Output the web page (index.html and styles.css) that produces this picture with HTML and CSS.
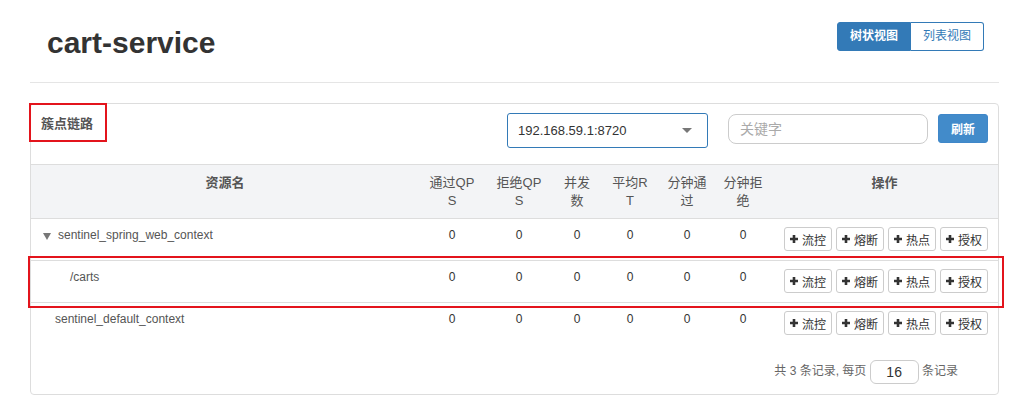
FILE: index.html
```html
<!DOCTYPE html>
<html lang="zh-CN">

<head>
    <meta charset="UTF-8">
    <title>cart-service - 簇点链路</title>
    <link rel="stylesheet" href="styles.css">
</head>

<body>
    <div class="page">
        <div class="page-header">
            <h1 class="app-title">cart-service</h1>
            <div class="btn-group">
                <button class="view-btn active">树状视图</button>
                <button class="view-btn">列表视图</button>
            </div>
        </div>

        <div class="panel">
            <div class="panel-top">
                <span class="panel-title">簇点链路</span>
                <div class="toolbar">
                    <div class="machine-select">
                        <span>192.168.59.1:8720</span>
                        <span class="caret"></span>
                    </div>
                    <input class="search-input" type="text" placeholder="关键字">
                    <button class="refresh-btn">刷新</button>
                </div>
            </div>

            <table class="res-table">
                <colgroup>
                    <col style="width: 388px">
                    <col style="width: 66px">
                    <col style="width: 68px">
                    <col style="width: 48px">
                    <col style="width: 58px">
                    <col style="width: 56px">
                    <col style="width: 56px">
                    <col>
                </colgroup>
                <thead>
                    <tr>
                        <th class="strong">资源名</th>
                        <th>通过QPS</th>
                        <th>拒绝QPS</th>
                        <th>并发数</th>
                        <th>平均RT</th>
                        <th>分钟通过</th>
                        <th>分钟拒绝</th>
                        <th class="strong">操作</th>
                    </tr>
                </thead>
                <tbody>
                    <tr>
                        <td class="name"><span class="toggle"></span>sentinel_spring_web_context</td>
                        <td>0</td><td>0</td><td>0</td><td>0</td><td>0</td><td>0</td>
                        <td class="ops">
                            <div class="ops-wrap">
                                <button class="op-btn"><svg class="plus" viewBox="0 0 8 8"><path d="M4 0v8M0 4h8"/></svg>流控</button>
                                <button class="op-btn"><svg class="plus" viewBox="0 0 8 8"><path d="M4 0v8M0 4h8"/></svg>熔断</button>
                                <button class="op-btn"><svg class="plus" viewBox="0 0 8 8"><path d="M4 0v8M0 4h8"/></svg>热点</button>
                                <button class="op-btn"><svg class="plus" viewBox="0 0 8 8"><path d="M4 0v8M0 4h8"/></svg>授权</button>
                            </div>
                        </td>
                    </tr>
                    <tr>
                        <td class="name child">/carts</td>
                        <td>0</td><td>0</td><td>0</td><td>0</td><td>0</td><td>0</td>
                        <td class="ops">
                            <div class="ops-wrap">
                                <button class="op-btn"><svg class="plus" viewBox="0 0 8 8"><path d="M4 0v8M0 4h8"/></svg>流控</button>
                                <button class="op-btn"><svg class="plus" viewBox="0 0 8 8"><path d="M4 0v8M0 4h8"/></svg>熔断</button>
                                <button class="op-btn"><svg class="plus" viewBox="0 0 8 8"><path d="M4 0v8M0 4h8"/></svg>热点</button>
                                <button class="op-btn"><svg class="plus" viewBox="0 0 8 8"><path d="M4 0v8M0 4h8"/></svg>授权</button>
                            </div>
                        </td>
                    </tr>
                    <tr>
                        <td class="name leaf">sentinel_default_context</td>
                        <td>0</td><td>0</td><td>0</td><td>0</td><td>0</td><td>0</td>
                        <td class="ops">
                            <div class="ops-wrap">
                                <button class="op-btn"><svg class="plus" viewBox="0 0 8 8"><path d="M4 0v8M0 4h8"/></svg>流控</button>
                                <button class="op-btn"><svg class="plus" viewBox="0 0 8 8"><path d="M4 0v8M0 4h8"/></svg>熔断</button>
                                <button class="op-btn"><svg class="plus" viewBox="0 0 8 8"><path d="M4 0v8M0 4h8"/></svg>热点</button>
                                <button class="op-btn"><svg class="plus" viewBox="0 0 8 8"><path d="M4 0v8M0 4h8"/></svg>授权</button>
                            </div>
                        </td>
                    </tr>
                </tbody>
            </table>

            <div class="pager">
                共 3 条记录, 每页 <input class="page-size" type="text" value="16"> 条记录
            </div>
        </div>

        <!-- red highlight boxes from the screenshot -->
        <div class="mark mark-title"></div>
        <div class="mark mark-row"></div>
    </div>
</body>

</html>
```

FILE: styles.css
```css
body {
    margin: 0;
    font-family: "Liberation Sans", "Noto Sans CJK SC", sans-serif;
    font-size: 12px;
    color: #333;
    background: #fff;
}

.page {
    position: relative;
    padding: 0 30px;
}

.page-header {
    display: flex;
    justify-content: space-between;
    align-items: flex-start;
    height: 82px;
    border-bottom: 1px solid #e5e5e5;
}

.app-title {
    margin: 26px 0 0 17px;
    font-size: 30px;
    line-height: 33px;
    font-weight: bold;
    color: #333;
}

.btn-group {
    display: flex;
    margin: 22px 15px 0 0;
}

.view-btn {
    font-family: inherit;
    font-size: 12px;
    line-height: 17px;
    padding: 5px 12px;
    background: #fff;
    color: #337ab7;
    border: 1px solid #337ab7;
    cursor: pointer;
}

.view-btn:first-child {
    border-radius: 3px 0 0 3px;
}

.view-btn:last-child {
    border-radius: 0 3px 3px 0;
    border-left: none;
}

.view-btn.active {
    background: #337ab7;
    color: #fff;
    font-weight: bold;
}

.panel {
    margin-top: 20px;
    border: 1px solid #ddd;
    border-radius: 4px;
}

.panel-top {
    display: flex;
    align-items: flex-start;
    height: 60px;
    padding: 10px 10px 0;
    box-sizing: border-box;
}

.panel-title {
    font-size: 13px;
    line-height: 20px;
    font-weight: bold;
    color: #555;
}

.toolbar {
    display: flex;
    align-items: flex-start;
    margin-left: auto;
    gap: 10px;
}

.machine-select {
    display: flex;
    align-items: center;
    justify-content: space-between;
    width: 201px;
    height: 35px;
    margin: -1px 10px 0 0;
    padding: 0 15px 0 10px;
    box-sizing: border-box;
    border: 1px solid #337ab7;
    border-radius: 3px;
    font-size: 13px;
    color: #333;
}

.caret {
    width: 0;
    height: 0;
    border-left: 5px solid transparent;
    border-right: 5px solid transparent;
    border-top: 5px solid #777;
}

.search-input {
    width: 200px;
    height: 30px;
    box-sizing: border-box;
    padding: 0 11px;
    border: 1px solid #ccc;
    border-radius: 8px;
    font-family: inherit;
    font-size: 14px;
    outline: none;
}

.search-input::placeholder {
    color: #aaa;
}

.refresh-btn {
    width: 50px;
    height: 29px;
    border: 1px solid #3f87c9;
    border-radius: 3px;
    background: #428bca;
    color: #fff;
    font-family: inherit;
    font-size: 12px;
    font-weight: bold;
    cursor: pointer;
}

.res-table {
    width: 100%;
    table-layout: fixed;
    border-collapse: collapse;
}

.res-table th {
    padding: 9px 8px 8px;
    border-top: 1px solid #ddd;
    border-bottom: 1px solid #ddd;
    background: #f3f4f6;
    font-size: 13px;
    line-height: 18px;
    font-weight: normal;
    color: #555;
    text-align: center;
    vertical-align: top;
    word-break: break-all;
}

.res-table th.strong {
    font-weight: bold;
}

.res-table td {
    padding: 8px 8px 9px;
    border-top: 1px solid #ddd;
    line-height: 17px;
    text-align: center;
    vertical-align: top;
}

.res-table td.name {
    text-align: left;
    padding-left: 12px;
    color: #555;
}

.res-table td.child {
    padding-left: 39px;
}

.res-table td.leaf {
    padding-left: 24px;
}

.res-table td.ops {
    padding-left: 0;
    padding-right: 0;
}

.toggle {
    display: inline-block;
    width: 0;
    height: 0;
    margin-right: 7px;
    border-left: 4px solid transparent;
    border-right: 4px solid transparent;
    border-top: 7px solid #777;
    vertical-align: -1px;
}

.ops-wrap {
    display: flex;
    justify-content: flex-end;
    gap: 4px;
    padding-right: 10px;
}

.op-btn {
    display: flex;
    align-items: center;
    flex-shrink: 0;
    gap: 4px;
    height: 24px;
    padding: 0 5px;
    border: 1px solid #ccc;
    border-radius: 3px;
    background: #fff;
    color: #333;
    font-family: inherit;
    font-size: 12px;
    white-space: nowrap;
    cursor: pointer;
}

.plus {
    width: 8px;
    height: 8px;
    stroke: #333;
    stroke-width: 2.6;
}

.pager {
    text-align: right;
    padding: 16px 40px 10px 0;
    color: #666;
    font-size: 12px;
}

.page-size {
    width: 49px;
    height: 24px;
    box-sizing: border-box;
    border: 1px solid #ccc;
    border-radius: 6px;
    text-align: center;
    font-family: inherit;
    font-size: 14px;
    color: #333;
    vertical-align: middle;
}

.mark {
    position: absolute;
    border: 2px solid #e3141c;
    box-sizing: border-box;
}

.mark-title {
    left: 29px;
    top: 103px;
    width: 78px;
    height: 39px;
}

.mark-row {
    left: 28px;
    top: 256px;
    width: 976px;
    height: 52px;
}
```
